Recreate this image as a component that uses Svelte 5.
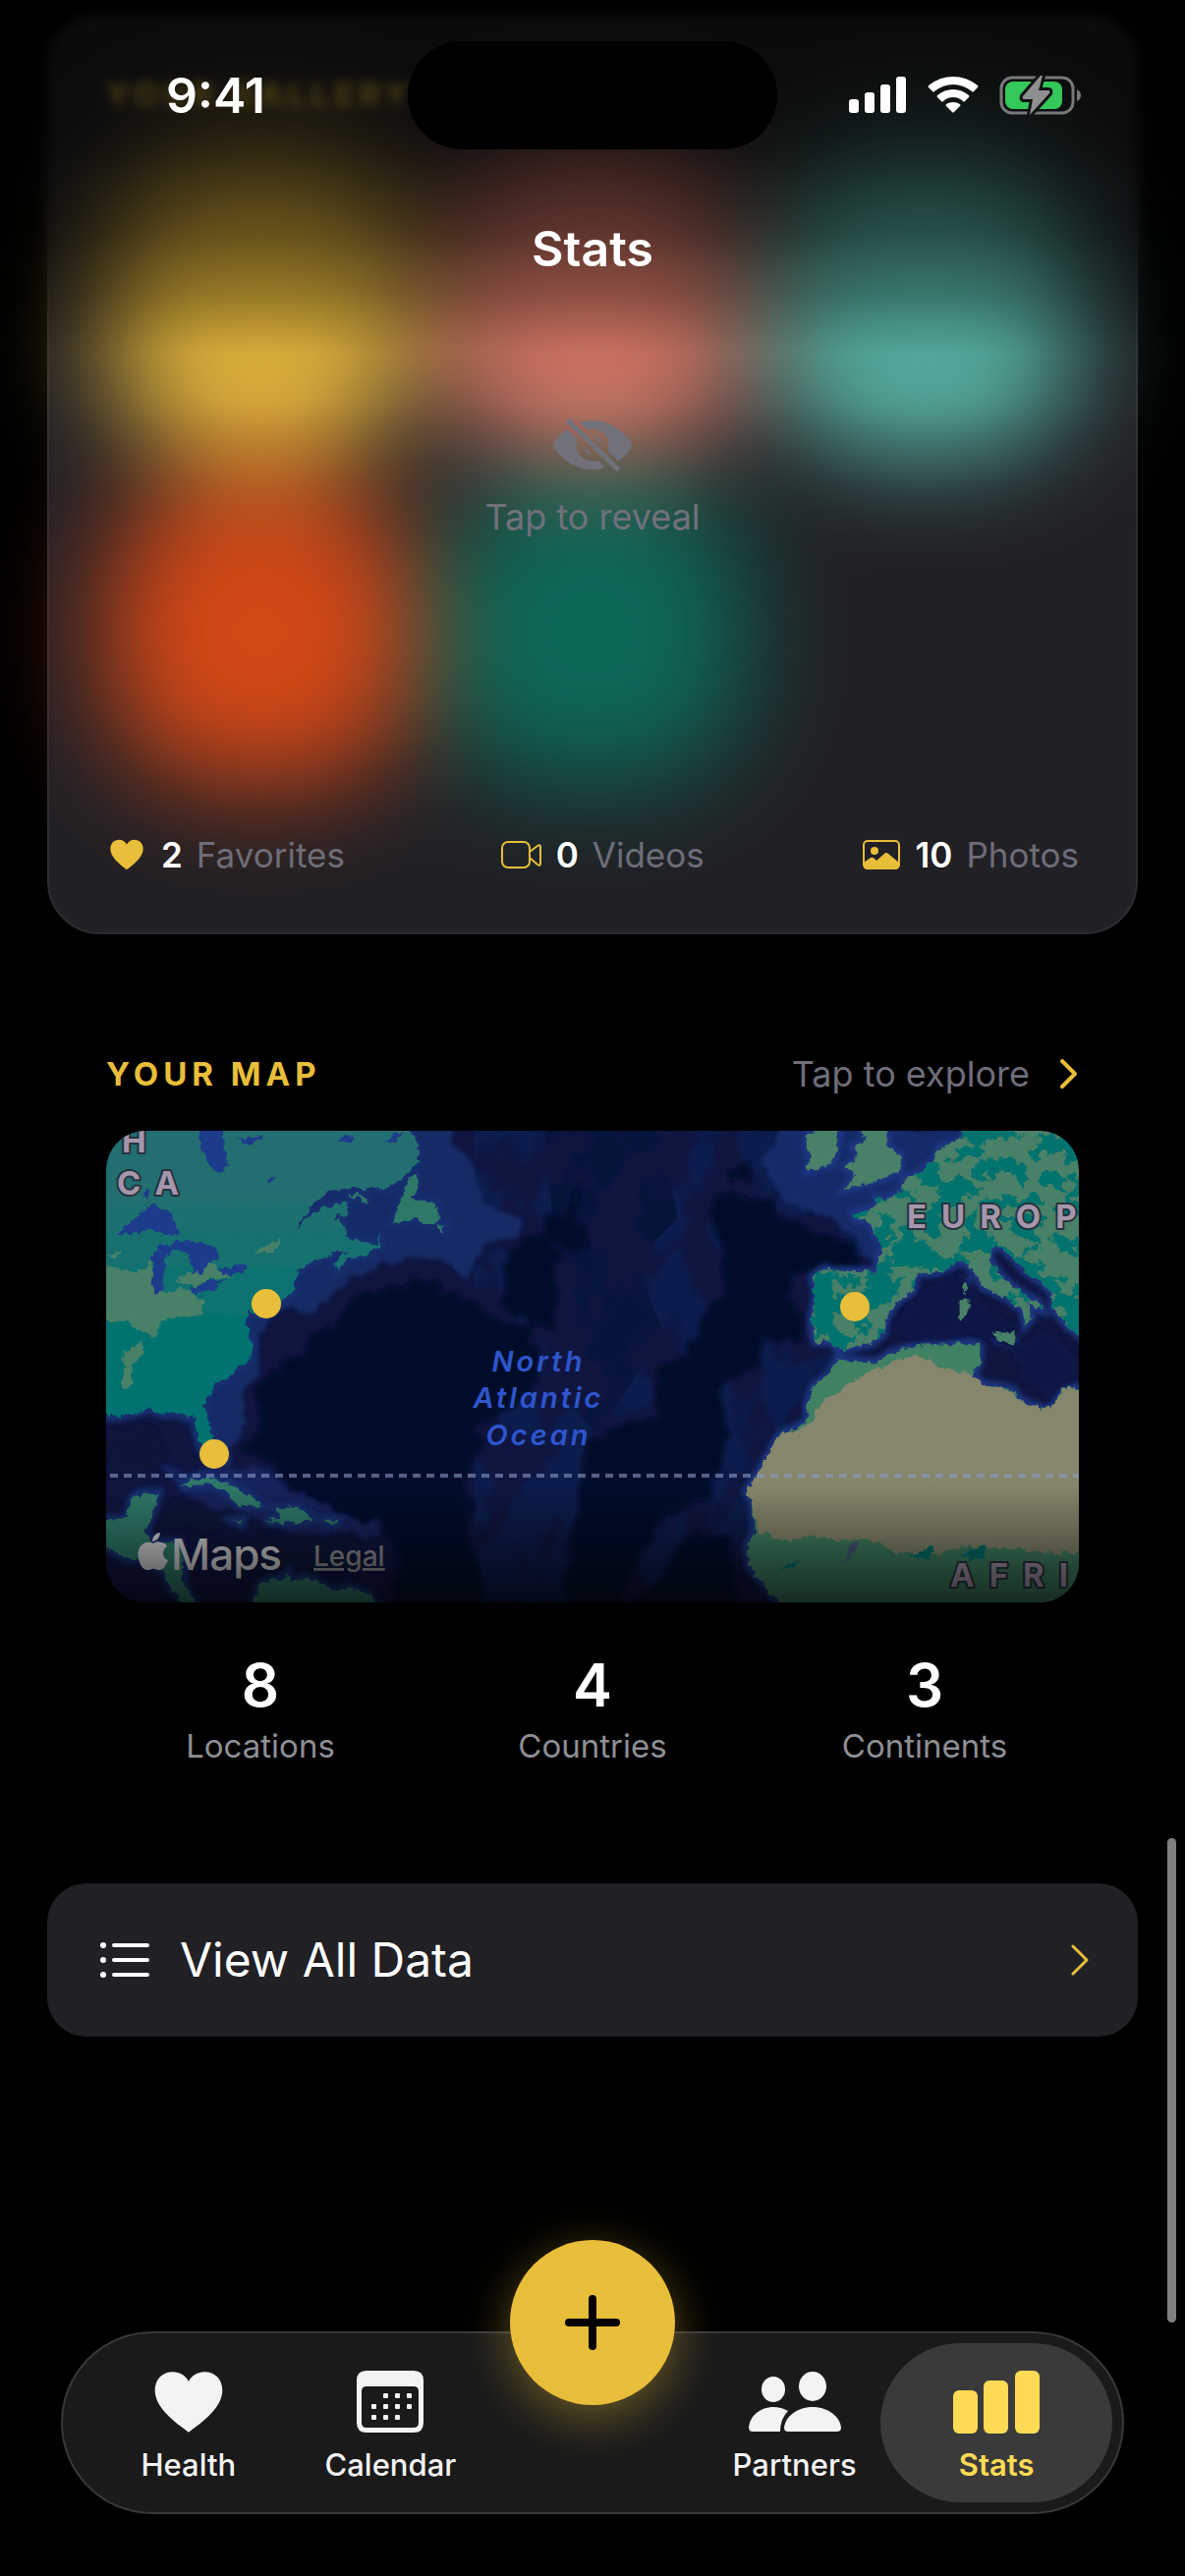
<script>
	let revealed = $state(false);
	let activeTab = $state('Stats');

	const photos = ['#ecbd3e', '#dd7c69', '#5ab9aa', '#d24817', '#0d6858'];

	const mapStats = [
		{ value: 8, label: 'Locations' },
		{ value: 4, label: 'Countries' },
		{ value: 3, label: 'Continents' }
	];

	const pins = [
		{ x: 163, y: 176 },
		{ x: 110, y: 329 },
		{ x: 762, y: 179 }
	];

	const calendarDots = [
		[2, 0], [3, 0], [4, 0],
		[1, 1], [2, 1], [3, 1], [4, 1],
		[1, 2], [2, 2], [3, 2]
	];
</script>

{#snippet heart()}
	<path d="M50 92C20 70 1 51 1 29 1 13 12 2 27 2c10 0 18 5 23 14C55 7 63 2 73 2c15 0 26 11 26 27 0 22-19 41-49 63z" fill="currentColor" />
{/snippet}

<div class="page">
	<header class="top">
		<div class="status-bar">
			<span class="time">9:41</span>
			<span class="island"></span>
			<span class="status-icons">
				<svg width="59" height="38" viewBox="0 0 59 38" fill="#fff" aria-hidden="true">
					<rect x="0" y="23" width="10" height="14" rx="3" />
					<rect x="16" y="16" width="10" height="21" rx="3" />
					<rect x="32" y="8" width="10" height="29" rx="3" />
					<rect x="48" y="0" width="10" height="37" rx="3" />
				</svg>
				<svg width="52" height="38" viewBox="0 0 52 38" fill="#fff" aria-hidden="true">
					<path d="M1 11Q0 10 1 9 12 0 26 0t25 9q1 1 0 2l-4 4q-1 1-2 0Q36 8 26 8T7 15q-1 1-2 0z" />
					<path d="M10 21q-1-1 0-2 7-6 16-6t16 6q1 1 0 2l-4 4q-1 1-2 0-4-4-10-4t-10 4q-1 1-2 0z" />
					<path d="M19 30q-1-1 0-2 3-2 7-2t7 2q1 1 0 2l-6 6q-1 1-2 0z" />
				</svg>
				<svg width="84" height="42" viewBox="0 0 84 42" aria-hidden="true">
					<rect x="2" y="3" width="73" height="36" rx="11" fill="none" stroke="#77797b" stroke-width="3" />
					<path d="M79 15q4 2 4 6t-4 6z" fill="#77797b" />
					<rect x="6" y="7" width="58" height="28" rx="8" fill="#34c759" />
					<path d="M42 1 24 22q-1 3 1 3h9l-3 16 20-22q1-3-1-3h-10l4-15z" fill="#8d8f90" stroke="#101214" stroke-width="6" paint-order="stroke" stroke-linejoin="round" />
				</svg>
			</span>
		</div>
		<h1>Stats</h1>
	</header>

	<section class="gallery">
		<h2>YOUR GALLERY</h2>
		<div class="photos">
			<div class="grid" class:blurred={!revealed}>
				{#each photos as color}
					<div class="photo" style="background: {color}"></div>
				{/each}
			</div>
			{#if !revealed}
				<button class="reveal" onclick={() => (revealed = true)}>
					<svg width="80" height="54" viewBox="0 0 80 54" aria-hidden="true">
						<mask id="slash">
							<rect width="80" height="54" fill="#fff" />
							<circle cx="40" cy="27" r="13" fill="none" stroke="#000" stroke-width="7" />
							<path d="M15 2 66 53" stroke="#000" stroke-width="14" />
						</mask>
						<path d="M0 27C2 20 18 2 40 2s38 18 40 25c-2 7-18 25-40 25S2 34 0 27z" fill="currentColor" mask="url(#slash)" />
						<path d="M16 3 65 51" stroke="currentColor" stroke-width="5" stroke-linecap="round" />
					</svg>
					<span>Tap to reveal</span>
				</button>
			{/if}
		</div>
		<ul class="totals">
			<li>
				<svg width="42" height="32" viewBox="0 0 100 94" aria-hidden="true">{@render heart()}</svg>
				<strong>2</strong> Favorites
			</li>
			<li>
				<svg width="42" height="28" viewBox="0 0 42 28" fill="none" stroke="currentColor" stroke-width="2" stroke-linejoin="round" aria-hidden="true">
					<rect x="1" y="1" width="28" height="26" rx="6" />
					<path d="m29 11 8-6q3-2 3 1v17q0 3-3 1l-8-7z" />
				</svg>
				<strong>0</strong> Videos
			</li>
			<li>
				<svg width="42" height="32" viewBox="0 0 40 32" aria-hidden="true">
					<rect x="2" y="2" width="36" height="28" rx="4" fill="none" stroke="currentColor" stroke-width="2" />
					<circle cx="13" cy="12" r="4" fill="currentColor" />
					<path d="M2 24 9 19q2-1 4 1l2 2 8-7q2-2 4 0l11 9v3q0 4-4 4H6q-4 0-4-4z" fill="currentColor" />
				</svg>
				<strong>10</strong> Photos
			</li>
		</ul>
	</section>

	<section class="map-section">
		<div class="section-head">
			<h2>YOUR MAP</h2>
			<button class="explore">
				Tap to explore
				<svg width="20" height="32" viewBox="0 0 20 32" fill="none" stroke="#e8be3a" stroke-width="4" stroke-linecap="round" stroke-linejoin="round" aria-hidden="true"><path d="m3 3 13 13L3 29" /></svg>
			</button>
		</div>

		<div class="map">
			<svg viewBox="0 0 990 480" preserveAspectRatio="xMidYMid slice" role="img" aria-label="Map of visited places">
				<defs>
					<filter id="coast" x="-5%" y="-5%" width="110%" height="110%">
						<feTurbulence type="fractalNoise" baseFrequency="0.05" numOctaves="4" seed="4" />
						<feDisplacementMap in="SourceGraphic" scale="24" xChannelSelector="R" yChannelSelector="G" />
					</filter>
					<filter id="shelf" x="-10%" y="-10%" width="120%" height="120%">
						<feGaussianBlur stdDeviation="7" />
					</filter>
					<filter id="soft" x="-10%" y="-10%" width="120%" height="120%">
						<feTurbulence type="fractalNoise" baseFrequency="0.015" numOctaves="3" seed="9" />
						<feDisplacementMap in="SourceGraphic" scale="60" xChannelSelector="R" yChannelSelector="G" />
						<feGaussianBlur stdDeviation="6" />
					</filter>
					<!-- keeps only the peaks of the noise inside the shape -->
					<filter id="mottle" x="0" y="0" width="100%" height="100%" color-interpolation-filters="sRGB">
						<feTurbulence type="fractalNoise" baseFrequency="0.014 0.02" numOctaves="3" seed="7" />
						<feColorMatrix values="0 0 0 0 0  0 0 0 0 0  0 0 0 0 0  30 0 0 0 -15" result="noise" />
						<feComposite in="SourceGraphic" in2="noise" operator="in" />
					</filter>
					<filter id="ridge" x="0" y="0" width="100%" height="100%" color-interpolation-filters="sRGB">
						<feTurbulence type="fractalNoise" baseFrequency="0.007 0.006" numOctaves="4" seed="21" />
						<feColorMatrix values="0 0 0 0 0  0 0 0 0 0  0 0 0 0 0  9 0 0 0 -4" result="noise" />
						<feComposite in="SourceGraphic" in2="noise" operator="in" />
					</filter>
					<linearGradient id="america" x1="0" y1="0" x2="0" y2="1">
						<stop offset="0.2" stop-color="#236e70" />
						<stop offset="0.6" stop-color="#05736f" />
					</linearGradient>
					<path id="west-land" d="M30 258H905L940 320 942 360 900 395 850 428H690L640 470 600 520 583 538 640 490 700 465H740L735 490 705 505 730 520 735 550 780 565 820 570 835 545 830 575 790 600 735 610 710 640 700 620 720 595 745 585 700 595 650 610 600 635 585 665 590 690 560 705 550 720 500 760 455 740 450 780 465 820 460 870 400 910 350 945 330 985 340 1020 355 1070 345 1110 320 1090 305 1045 300 1010 280 1018 250 1005 215 1010 180 995 130 1005 90 1015H30z" />
					<g id="west-isles">
						<path d="M865 515 890 460 915 400 935 390 940 430 920 450 965 460 995 465 1000 500 985 520 955 515 930 505z" />
						<path d="M740 440 760 440 802 462 780 462zM990 520H1018L1010 540z" />
						<path d="M262 1195 290 1178 340 1172 400 1190 460 1215 495 1245H430L400 1215 350 1190 300 1192z" />
						<path d="M500 1283 545 1278 535 1250H600L640 1278 580 1290zM675 1282H708L700 1292H678zM415 1283 440 1280 435 1292z" />
						<path d="M30 1285 110 1275 125 1225 150 1212H200L185 1260 165 1310 180 1340H260L275 1400 270 1440 310 1500H280L235 1460 215 1415 165 1385 110 1380 30 1340z" />
						<path d="M465 1510 490 1445 555 1430 570 1415 575 1440 620 1430 660 1445 700 1465 740 1455 800 1470 820 1510z" />
					</g>
					<path id="europe" d="M1065 258H1420V820L1360 780 1320 735V700L1290 670 1240 640 1200 600 1170 575 1145 580 1140 610 1170 650 1220 690 1280 720 1290 740 1245 725 1260 760 1240 780 1235 740 1190 710 1120 680 1095 640 1060 612 1000 645H930L925 690 870 725 850 755 840 800 800 828 760 835 710 845 690 822H642L632 770 645 700 635 655 670 633 700 640H820L825 600 830 570 815 550 800 515 755 505 750 490 820 475 815 450 850 455 885 435 895 405 940 385 980 355 1000 320 1060 300z" />
					<g id="east-isles">
						<path d="M770 258H845L850 320 888 345 885 385 840 400 770 420 728 430 760 390 730 370 765 345 750 320 785 300zM620 285 715 258 705 330 690 365 620 382 630 345 617 320z" />
						<path d="M1055 715 1080 710V750L1055 770zM1065 665H1075L1072 700 1062 690zM1150 797 1212 800 1210 832 1160 815z" />
					</g>
					<path id="africa" d="M705 868 760 872 820 875 860 850 930 833 1080 825 1115 830 1110 880 1090 905 1120 930 1205 945 1230 975 1300 998 1330 985 1345 940H1420V1520H565L500 1450 455 1400 447 1350 470 1310 465 1240 447 1210 500 1130 540 1065 620 1028V985L635 940 690 900z" />
					<path id="sahara" d="M640 1028 645 995 740 930 800 900 870 870 930 858 970 865 1000 890 1090 905 1120 930 1205 950 1230 975 1300 998 1330 985 1350 942H1420V1365H1300L1200 1355 1080 1350 1000 1365 880 1370 830 1340 770 1330 680 1335 640 1320 560 1335 480 1310 465 1240 447 1210 500 1130 540 1065z" />
				</defs>

				<rect width="990" height="480" fill="#0f153f" />

				<g transform="translate(-18 -110) scale(0.357 0.395)">
					<rect x="1100" y="258" width="1100" height="1260" fill="#0c1c4c" filter="url(#ridge)" />
					<path d="M1300 258H1620L1680 500 1560 620 1640 800 1450 1060 1300 900 1340 700z" fill="#020c2c" opacity="0.45" filter="url(#ridge)" />
					<g filter="url(#soft)" fill="#13235c">
						<path d="M880 240H1020L1080 370 1130 470 1240 520 1220 550 1130 560 1100 610 1080 658 1030 630 970 600 900 615 800 640 720 680 680 720 600 745 550 735 510 780 480 850V890L440 960 445 1050 400 1150 330 1120 290 1010 200 995 600 500z" fill="#162965" />
						<path d="M200 1150 500 1150 620 1230 790 1270 820 1330 560 1310 300 1230z" />
						<path d="M480 950 530 890 600 860 650 800 750 730 860 675 980 655 1060 715 1180 765 1270 790 1255 830 1300 860 1290 920 1200 990 1110 1040 1130 1100 1060 1180 1110 1240 1090 1330 1140 1520H860L900 1380 810 1290 640 1240 520 1140 450 1100 500 1030z" fill="#010c2b" />
						<path d="M1180 620 1240 560 1310 550 1350 600 1330 680 1340 790 1190 760zM1290 500 1360 480 1410 400 1380 500 1430 560 1390 590 1310 560z" fill="#010c2b" />
						<path d="M50 1060 180 1040 250 1130 150 1150 60 1180zM230 1230 480 1260 400 1290 200 1310zM330 1340 760 1310 800 1400 420 1420z" fill="#0a1238" />
					</g>
					<g filter="url(#shelf)" fill="none" stroke="#182e70" stroke-width="26">
						<use href="#west-land" />
						<use href="#west-isles" />
					</g>
					<g filter="url(#coast)">
						<use href="#west-land" fill="url(#america)" />
						<g fill="#488068">
							<path d="M30 620 110 640H150L180 605 185 680 220 695 260 680 335 715 320 750 250 760 205 770 195 810 150 795 110 770 30 765zM100 850 155 822 158 850 125 880V930L95 945 100 900z" />
							<path d="M245 665 300 640 345 610 370 640 415 655 350 660 300 680zM470 590 550 557 540 580 500 595zM50 600 90 585 80 605z" />
						</g>
						<g fill="#1f3a8a">
							<path d="M312 258 318 320 345 365 370 392 400 370 390 330 383 258zM80 545 120 515 175 472 215 480 240 500 262 545 220 550 185 530 150 540z" />
							<path d="M175 610 195 575 280 560 360 575 370 605 340 620 325 650 300 640 285 600 240 585 220 600 212 660 215 690 190 698 178 670 190 620z" />
							<path d="M285 690 340 665H390L360 685 310 700zM370 635 460 620 455 640 385 650zM425 300 500 290 490 305 440 312zM710 300 760 290 740 310zM505 410 535 390 525 410zM840 318 870 290 900 280 870 305zM155 440 170 430 175 455z" />
						</g>
						<use href="#west-isles" fill="#2f7868" />
					</g>
				</g>

				<g transform="translate(492 -110) scale(0.357 0.395)">
					<g filter="url(#soft)" fill="#010c2b">
						<path d="M560 270H1060L980 360 880 440 830 560 840 640 780 600 720 520 600 480 540 430 490 370z" fill="#172b69" />
						<path d="M370 440 450 450 540 480 620 530 720 560 760 600 770 635 640 625 570 640 560 720 610 760 600 830 500 810 470 880 380 930 370 1000 400 1060 340 1230 210 1270 60 1520H-80L0 1080 120 1030 190 1020 200 880 280 860 330 750 380 690V600L340 540z" />
						<path d="M300 1300 400 1320 430 1520H100z" fill="#060c2c" />
						<path d="M390 380 450 370 460 410 400 420z" />
					</g>
					<g filter="url(#shelf)" fill="none" stroke="#1b3580" stroke-width="24">
						<use href="#europe" />
						<use href="#east-isles" />
						<use href="#africa" />
					</g>
					<path d="M850 790 940 680 1060 640 1120 720 1200 770 1230 840 1290 780 1394 860V920L1310 970 1220 900 1210 840 1100 800 950 820z" fill="#0a1844" filter="url(#soft)" />
					<g filter="url(#coast)">
						<g fill="#488068">
							<use href="#europe" />
							<use href="#east-isles" />
							<use href="#africa" fill="#3f8064" />
						</g>
						<use href="#europe" fill="#04736e" filter="url(#mottle)" />
						<path d="M640 650 700 645 690 720 700 790 650 810 640 740zM760 700 900 650 860 720 800 740zM860 570 960 560 980 620 870 630z" fill="#04736e" />
						<use href="#sahara" fill="#86866c" />
						<path d="M720 1390 745 1345 772 1325 765 1350 740 1380z" fill="#4a5a78" />
						<path d="M905 1370 990 1350 960 1385zM1050 1370 1130 1350 1120 1385zM540 1405 600 1385 580 1410z" fill="#04736e" />
					</g>
				</g>

				<path d="M4 351H990" stroke="#8b9bc4" stroke-opacity="0.6" stroke-width="4" stroke-dasharray="8 6" />

				<g class="ocean">
					<text x="440" y="245">North</text>
					<text x="440" y="282">Atlantic</text>
					<text x="440" y="320">Ocean</text>
				</g>
				<g class="continent">
					<text x="16" y="22">H</text>
					<text x="11" y="65">CA</text>
					<text x="815" y="99">EUROP</text>
					<text x="859" y="464">AFRI</text>
				</g>
				{#each pins as pin}
					<circle cx={pin.x} cy={pin.y} r="15" fill="#e8be3a" />
				{/each}
				<g fill="#d0d0d4">
					<path d="M48 420c3-2 6-2 8-1 3 0 5 2 6 4-6 4-5 12 1 14-2 5-5 10-9 10-3 0-4-2-7-1-3 1-4 1-6 1-6-1-10-14-8-20 2-7 9-10 15-7zM47 418c0-5 4-9 8-9 0 5-4 9-8 9z" />
					<text class="brand" x="66" y="447">Maps</text>
				</g>
				<a href="#legal"><text class="legal" x="211" y="443">Legal</text></a>
			</svg>
			<div class="map-fade"></div>
		</div>

		<dl class="map-stats">
			{#each mapStats as stat}
				<div>
					<dd>{stat.value}</dd>
					<dt>{stat.label}</dt>
				</div>
			{/each}
		</dl>
	</section>

	<button class="all-data">
		<svg width="52" height="40" viewBox="0 0 52 40" stroke="#fff" stroke-width="4" stroke-linecap="round" fill="#fff" aria-hidden="true">
			<path d="M15 5H49M15 20H49M15 35H49" />
			<g stroke="none"><circle cx="4" cy="5" r="3" /><circle cx="4" cy="20" r="3" /><circle cx="4" cy="35" r="3" /></g>
		</svg>
		<span>View All Data</span>
		<svg width="20" height="32" viewBox="0 0 20 32" fill="none" stroke="#e8be3a" stroke-width="3" stroke-linecap="round" stroke-linejoin="round" aria-hidden="true"><path d="m3 2 14 14L3 30" /></svg>
	</button>

	<nav>
		<button class="tab" class:active={activeTab === 'Health'} onclick={() => (activeTab = 'Health')}>
			<svg width="70" height="64" viewBox="0 0 100 94" preserveAspectRatio="none" aria-hidden="true">{@render heart()}</svg>
			Health
		</button>
		<button class="tab" class:active={activeTab === 'Calendar'} onclick={() => (activeTab = 'Calendar')}>
			<svg width="70" height="64" viewBox="0 0 70 64" fill="currentColor" aria-hidden="true">
				<path fill-rule="evenodd" d="M11 0H59Q69 0 69 10V53Q69 63 59 63H11Q1 63 1 53V10Q1 0 11 0zM11 16Q6 16 6 21V53Q6 58 11 58H59Q64 58 64 53V21Q64 16 59 16z" />
				{#each calendarDots as [col, row]}
					<rect x={4 + col * 12} y={23 + row * 11} width="5" height="5" rx="1" />
				{/each}
			</svg>
			Calendar
		</button>
		<button class="add" aria-label="Add">
			<svg width="56" height="56" viewBox="0 0 56 56" stroke="#000" stroke-width="8" stroke-linecap="round" aria-hidden="true"><path d="M28 4V52M4 28H52" /></svg>
		</button>
		<button class="tab" class:active={activeTab === 'Partners'} onclick={() => (activeTab = 'Partners')}>
			<svg width="94" height="64" viewBox="0 0 94 64" fill="currentColor" aria-hidden="true">
				<ellipse cx="25" cy="19" rx="12" ry="13" />
				<ellipse cx="65" cy="16" rx="14" ry="15" />
				<path d="M4 62Q0 62 0 58C1 46 12 37 25 37q8 0 15 4-8 8-8 21z" />
				<path d="M40 62q-4 0-4-4C37 47 49 37 65 37s28 10 29 21q0 4-4 4z" />
			</svg>
			Partners
		</button>
		<button class="tab" class:active={activeTab === 'Stats'} onclick={() => (activeTab = 'Stats')}>
			<svg width="88" height="64" viewBox="0 0 88 64" fill="currentColor" aria-hidden="true">
				<rect x="0" y="20" width="25" height="44" rx="6" />
				<rect x="31" y="10" width="25" height="54" rx="6" />
				<rect x="63" y="0" width="25" height="64" rx="6" />
			</svg>
			Stats
		</button>
	</nav>

	<div class="scroll-thumb"></div>
</div>

<style>
	:global(body) {
		background: #000;
	}

	.page {
		position: relative;
		display: flex;
		flex-direction: column;
		box-sizing: border-box;
		min-height: 100vh;
		padding: 14px 48px 63px;
		overflow: hidden;
		background: #000;
		color: #fff;
		font-family: Inter, 'Liberation Sans', sans-serif;
	}

	h1,
	h2,
	ul,
	dl,
	dd {
		margin: 0;
		padding: 0;
	}

	button {
		border: none;
		padding: 0;
		background: none;
		color: inherit;
		font: inherit;
	}

	svg {
		flex: none;
		display: block;
	}

	.top {
		position: absolute;
		inset: 0 0 auto;
		z-index: 2;
		height: 430px;
		background: linear-gradient(rgba(0, 0, 0, 0.66) 0, rgba(0, 0, 0, 0.66) 150px, rgba(0, 0, 0, 0.54) 240px, rgba(0, 0, 0, 0.36) 300px, rgba(0, 0, 0, 0.08) 360px, transparent 410px);
		pointer-events: none;
	}

	.top::before {
		content: '';
		position: absolute;
		inset: 0 0 auto;
		z-index: -1;
		height: 340px;
		backdrop-filter: blur(6px);
		mask-image: linear-gradient(#000 60%, transparent);
	}

	.status-bar {
		display: grid;
		grid-template-columns: 1fr 376px 1fr;
		align-items: center;
		padding-top: 42px;
	}

	.time {
		padding-left: 24px;
		text-align: center;
		font-size: 50px;
		font-weight: 600;
		line-height: 60px;
	}

	.island {
		height: 110px;
		border-radius: 55px;
		background: #000;
	}

	.status-icons {
		display: flex;
		align-items: center;
		justify-content: center;
		gap: 21px;
		padding-right: 32px;
	}

	h1 {
		margin-top: 71px;
		text-align: center;
		font-size: 50px;
		font-weight: 600;
		line-height: 60px;
	}

	h2 {
		color: #e8be3a;
		font-size: 33px;
		font-weight: 700;
		letter-spacing: 5px;
		line-height: 40px;
	}

	.gallery {
		padding: 60px 58px 57px;
		border: 2px solid #2d2c31;
		border-radius: 54px;
		background: #212025;
	}

	.photos {
		position: relative;
		margin: 32px 0 48px;
	}

	.grid {
		display: grid;
		grid-template-columns: repeat(3, 1fr);
		gap: 24px;
	}

	.blurred {
		filter: blur(56px);
	}

	.photo {
		aspect-ratio: 1;
		border-radius: 120px;
	}

	.reveal {
		position: absolute;
		inset: 0;
		display: flex;
		flex-direction: column;
		align-items: center;
		justify-content: center;
		gap: 24px;
		width: 100%;
		padding-top: 26px;
		color: #71717c;
		font-size: 36px;
		line-height: 44px;
	}

	.totals {
		position: relative;
		display: flex;
		justify-content: space-between;
		color: #6e6d78;
		font-size: 35px;
		line-height: 44px;
		list-style: none;
	}

	.totals li {
		display: flex;
		align-items: center;
		gap: 14px;
	}

	.totals svg {
		color: #e8be3a;
	}

	.totals strong {
		color: #fff;
		font-weight: 600;
	}

	.map-section {
		padding: 120px 60px 120px;
	}

	.section-head {
		display: flex;
		align-items: center;
		justify-content: space-between;
		margin-bottom: 36px;
	}

	.explore {
		display: flex;
		align-items: center;
		gap: 30px;
		color: #6e6d78;
		font-size: 36px;
		line-height: 44px;
	}

	.map {
		position: relative;
		overflow: hidden;
		border-radius: 40px;
	}

	.map svg {
		width: 100%;
		height: auto;
	}

	.map-fade {
		position: absolute;
		inset: auto 0 0;
		height: 120px;
		background: linear-gradient(transparent, rgba(0, 0, 0, 0.65));
		pointer-events: none;
	}

	.ocean {
		fill: #2f55cc;
		font-size: 29px;
		font-style: italic;
		font-weight: 600;
		letter-spacing: 3px;
		text-anchor: middle;
	}

	.continent {
		fill: #a596ab;
		font-size: 33px;
		font-weight: 700;
		letter-spacing: 15px;
		paint-order: stroke;
		stroke: #26333c;
		stroke-width: 4px;
		stroke-linejoin: round;
	}

	.brand {
		font-size: 44px;
		font-weight: 500;
		letter-spacing: -1px;
	}

	.legal {
		fill: #8f9196;
		font-size: 28px;
		font-weight: 500;
		text-decoration: underline;
	}

	.map-stats {
		display: grid;
		grid-template-columns: repeat(3, 1fr);
		gap: 24px;
		margin-top: 48px;
		text-align: center;
	}

	.map-stats div {
		display: flex;
		flex-direction: column;
		gap: 6px;
	}

	.map-stats dd {
		font-size: 60px;
		font-weight: 600;
		line-height: 72px;
	}

	.map-stats dt {
		color: #8e8e93;
		font-size: 33px;
		line-height: 40px;
	}

	.all-data {
		display: flex;
		align-items: center;
		gap: 30px;
		padding: 48px 49px 48px 53px;
		border-radius: 40px;
		background: #212025;
		font-size: 48px;
		line-height: 60px;
	}

	.all-data span {
		flex: 1;
		text-align: left;
	}

	nav {
		display: grid;
		grid-template-columns: repeat(5, 1fr);
		margin: auto 14px 0;
		padding: 10px 25px;
		border: 2px solid #38383a;
		border-radius: 93px;
		background: #1a1a1a;
	}

	.tab {
		display: flex;
		flex-direction: column;
		align-items: center;
		gap: 14px;
		margin: 0 -15px;
		padding: 28px 0 20px;
		border-radius: 81px;
		color: #f3f3f3;
		font-size: 31px;
		font-weight: 500;
		line-height: 36px;
	}

	.tab.active {
		background: #3a3a3a;
		color: #ffdb55;
		font-weight: 600;
	}

	.add {
		display: grid;
		place-items: center;
		justify-self: center;
		width: 168px;
		height: 168px;
		margin: -105px 0 0;
		border-radius: 50%;
		background: #e8be3a;
		box-shadow: 0 12px 48px rgba(232, 190, 58, 0.4);
	}

	.scroll-thumb {
		position: absolute;
		top: 1871px;
		right: 9px;
		width: 9px;
		height: 493px;
		border-radius: 5px;
		background: #808080;
	}
</style>
